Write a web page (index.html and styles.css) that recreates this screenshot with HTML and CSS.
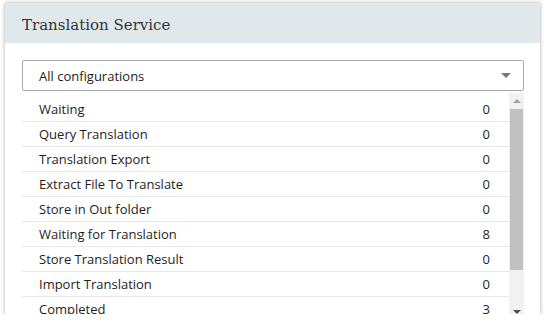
FILE: index.html
```html
<!DOCTYPE html>
<html>
<head>
  <title>Translation Service</title>
  <link rel="stylesheet" href="styles.css">
</head>
<body>
  <div class="panel">
    <div class="panel-header">
      <h2>Translation Service</h2>
    </div>
    <div class="panel-body">
      <div class="config-select">
        <span>All configurations</span>
        <span class="caret"></span>
      </div>
      <div class="status-list">
        <div class="rows">
          <div class="row"><span>Waiting</span><span>0</span></div>
          <div class="row"><span>Query Translation</span><span>0</span></div>
          <div class="row"><span>Translation Export</span><span>0</span></div>
          <div class="row"><span>Extract File To Translate</span><span>0</span></div>
          <div class="row"><span>Store in Out folder</span><span>0</span></div>
          <div class="row"><span>Waiting for Translation</span><span>8</span></div>
          <div class="row"><span>Store Translation Result</span><span>0</span></div>
          <div class="row"><span>Import Translation</span><span>0</span></div>
          <div class="row"><span>Completed</span><span>3</span></div>
        </div>
        <div class="scrollbar">
          <div class="sb-btn"><span class="sb-up"></span></div>
          <div class="sb-thumb"></div>
          <div class="sb-track"></div>
          <div class="sb-btn"><span class="sb-down"></span></div>
        </div>
      </div>
    </div>
  </div>
</body>
</html>
```

FILE: styles.css
```css
body {
  margin: 0;
  background-color: #fff;
  font-family: "Open Sans", "Noto Sans", sans-serif;
  color: #1e1e1e;
}

.panel {
  margin: 3px 0 0 5px;
  width: 535px;
  height: 311px;
  background-color: #fff;
  box-shadow: 0 0 4px rgba(0, 0, 0, 0.35);
  overflow: hidden;
}

.panel-header {
  box-sizing: border-box;
  height: 40px;
  background-color: #e1e8eb;
  padding: 3px 0 0 17px;
  display: flex;
  align-items: center;
}

.panel-header h2 {
  margin: 0;
  font-family: "DejaVu Serif", serif;
  font-weight: normal;
  font-size: 15px;
  color: #333;
}

.panel-body {
  padding: 17px 16px 0 17px;
}

.config-select {
  height: 29px;
  border: 1px solid #aaa;
  border-radius: 2px;
  display: flex;
  align-items: center;
  justify-content: space-between;
  padding: 0 12px 0 16px;
  font-size: 13px;
}

.caret {
  width: 0;
  height: 0;
  border-left: 5px solid transparent;
  border-right: 5px solid transparent;
  border-top: 5px solid #777;
}

.status-list {
  margin-top: 2px;
  display: flex;
  height: 227px;
}

.rows {
  flex: 1;
  padding-top: 4px;
  overflow: hidden;
}

.row {
  height: 24px;
  border-bottom: 1px solid #e6e6e6;
  display: flex;
  align-items: center;
  justify-content: space-between;
  padding: 0 19px 0 17px;
  font-size: 13px;
}

.scrollbar {
  width: 15px;
  background-color: #f1f1f1;
  display: flex;
  flex-direction: column;
  align-items: center;
}

.sb-btn {
  height: 16px;
  display: flex;
  align-items: center;
  justify-content: center;
}

.sb-up {
  border-left: 4px solid transparent;
  border-right: 4px solid transparent;
  border-bottom: 4px solid #a3a3a3;
}

.sb-down {
  border-left: 4px solid transparent;
  border-right: 4px solid transparent;
  border-top: 4px solid #505050;
}

.sb-thumb {
  width: 13px;
  height: 161px;
  background-color: #c1c1c1;
}

.sb-track {
  flex: 1;
}
```
